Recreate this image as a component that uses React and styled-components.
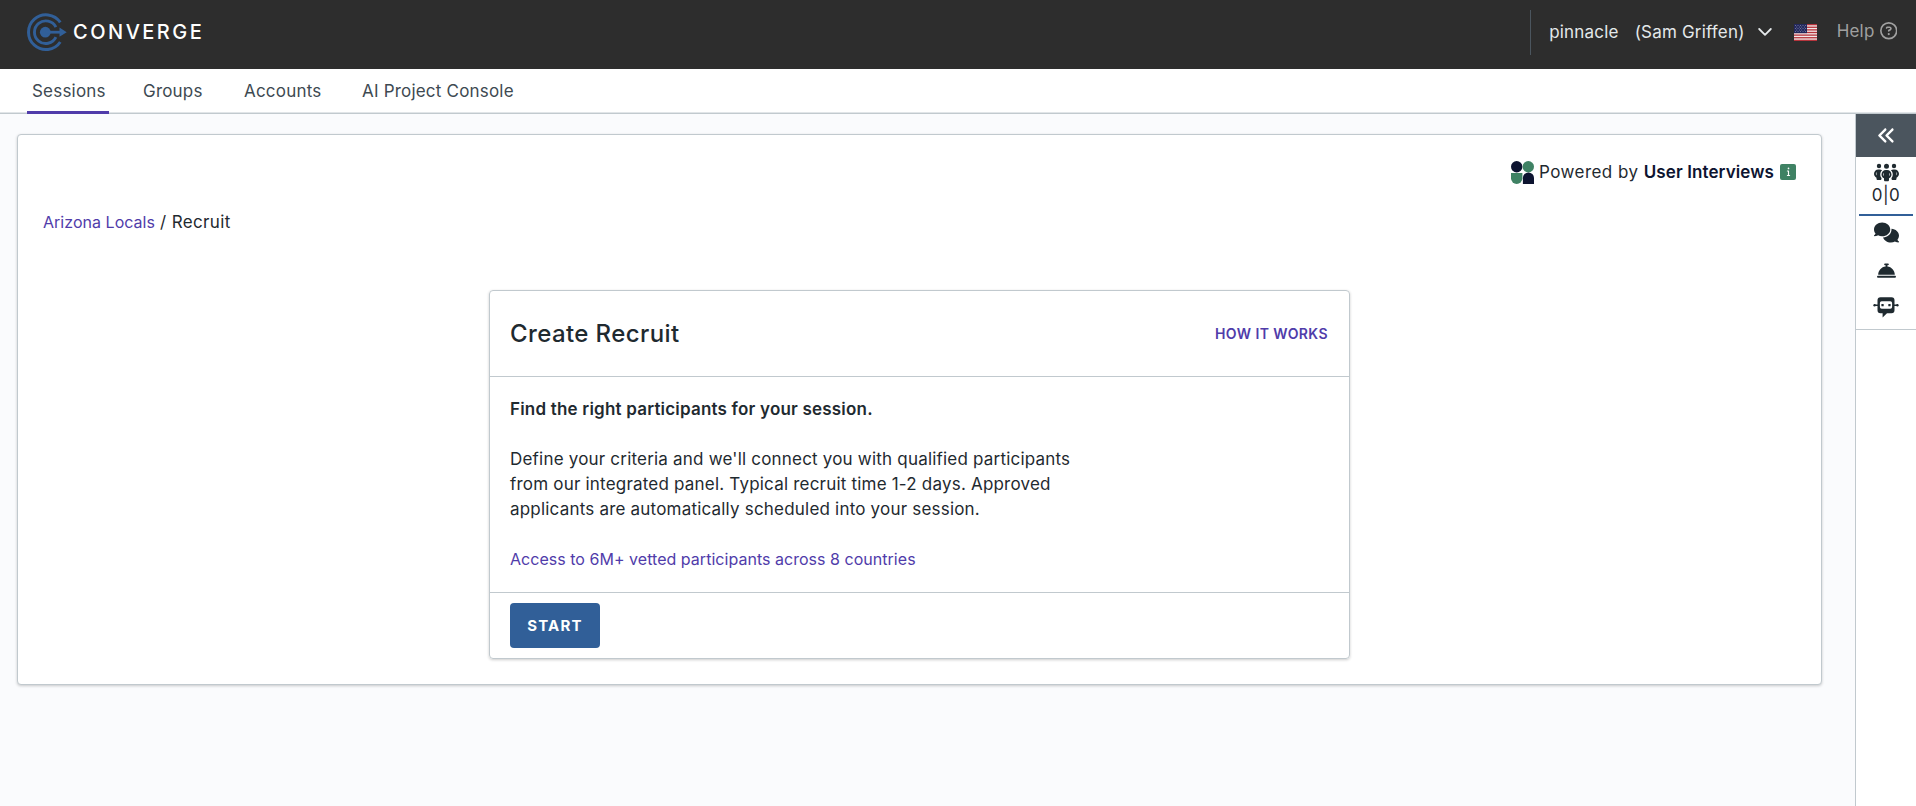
import React, { useState } from 'react';
import styled, { createGlobalStyle } from 'styled-components';
import {
  FaAnglesLeft,
  FaBellConcierge,
  FaComments,
  FaInfo,
  FaPeopleGroup,
  FaRegCircleQuestion,
} from 'react-icons/fa6';

const GlobalStyle = createGlobalStyle`
  * {
    box-sizing: border-box;
  }

  body {
    margin: 0;
    background: #fafbfd;
    color: #1f2a30;
    font-family: Metropolis, Inter, 'Liberation Sans', sans-serif;
    font-size: 17px;
    line-height: 25px;
    letter-spacing: 0.2px;
  }

  svg {
    display: block;
    flex-shrink: 0;
  }
`;

const Page = styled.div`
  display: flex;
  flex-direction: column;
  height: 100vh;
  overflow: hidden;
`;

const TopBar = styled.header`
  display: flex;
  align-items: center;
  justify-content: space-between;
  height: 69px;
  padding: 0 19px 5px 27px;
  background: #2d2d2d;
`;

const Brand = styled.div`
  display: flex;
  align-items: center;
  gap: 5px;
  color: #fff;
  font-size: 20px;
  font-weight: 500;
  letter-spacing: 2.5px;
`;

const Account = styled.div`
  display: flex;
  align-items: center;
  height: 45px;
  padding-left: 18px;
  border-left: 1px solid #4b555e;
  color: #e4e8ea;
  white-space: nowrap;
`;

const UserName = styled.span`
  margin: 0 13px 0 16px;
`;

const FlagSvg = styled.svg`
  margin: 0 20px 0 22px;
`;

const Help = styled.a`
  display: flex;
  align-items: center;
  gap: 5px;
  margin-bottom: 2px;
  color: #a0a0a0;
`;

const Nav = styled.nav`
  display: flex;
  gap: 29px;
  height: 45px;
  padding-left: 27px;
  background: #fff;
  box-shadow: inset 0 -1px #c1c9ce, inset 0 -2px #e1e5e8;
`;

const Tab = styled.a`
  width: ${props => props.$width}px;
  padding: 10px 0 0 5px;
  border-bottom: 3px solid ${props => (props.$active ? '#503caa' : 'transparent')};
  color: #3e4a52;
  white-space: nowrap;
  cursor: pointer;
`;

const Body = styled.div`
  display: flex;
  flex: 1;
  justify-content: space-between;
`;

const Panel = styled.main`
  width: 1805px;
  height: 551px;
  margin: 20px 0 0 17px;
  padding: 24px 25px;
  border: 1px solid #c1c9ce;
  border-radius: 4px;
  background: #fff;
  box-shadow: 0 1px 3px rgba(0, 0, 0, 0.2);
`;

const PoweredBy = styled.div`
  display: flex;
  align-items: center;
  justify-content: flex-end;
  height: 26px;
`;

const PoweredText = styled.span`
  margin: 0 6px 0 5px;
  letter-spacing: 0.45px;

  b {
    color: #0d1430;
    font-weight: 600;
    letter-spacing: 0.1px;
  }
`;

const InfoBadge = styled.span`
  display: flex;
  align-items: center;
  justify-content: center;
  width: 16px;
  height: 16px;
  margin-bottom: 1px;
  border-radius: 2px;
  background: #3f8264;
  color: #fff;
`;

const Breadcrumb = styled.div`
  margin-top: 25px;
  letter-spacing: 0.35px;

  a {
    color: #503caa;
    font-size: 16px;
    letter-spacing: 0.03px;
  }
`;

const Card = styled.section`
  width: 861px;
  height: 369px;
  margin: 55px 0 0 446px;
  border: 1px solid #c1c9ce;
  border-radius: 4px;
  box-shadow: 0 1px 3px rgba(0, 0, 0, 0.2);
`;

const CardHeader = styled.div`
  display: flex;
  align-items: center;
  justify-content: space-between;
  height: 86px;
  padding: 0 21px 0 20px;
  border-bottom: 1px solid #c1c9ce;
`;

const Title = styled.h1`
  margin: 0;
  font-size: 24px;
  font-weight: 500;
  letter-spacing: 0.4px;
`;

const HowLink = styled.a`
  color: #503caa;
  font-size: 14px;
  font-weight: 600;
  letter-spacing: 0.4px;
`;

const CardBody = styled.div`
  height: 216px;
  padding: 20px;
  border-bottom: 1px solid #c1c9ce;
`;

const Copy = styled.p`
  margin: 0 0 25px;
  font-weight: ${props => (props.$bold ? 600 : 400)};
`;

const AccessLink = styled.a`
  color: #503caa;
  font-size: 16px;
  letter-spacing: 0.03px;
`;

const CardFooter = styled.div`
  padding: 10px 20px;
`;

const StartButton = styled.button`
  display: block;
  width: 90px;
  height: 45px;
  padding: 0;
  border: none;
  border-radius: 4px;
  background: #315f98;
  color: #fff;
  font-family: inherit;
  font-size: 15px;
  font-weight: 700;
  letter-spacing: 1.2px;
  cursor: pointer;
`;

const Rail = styled.aside`
  display: flex;
  flex-direction: column;
  width: 61px;
  border-left: 1px solid #c1c9ce;
  background: #fff;
`;

const Collapse = styled.div`
  display: flex;
  align-items: center;
  justify-content: center;
  height: 43px;
  background: #4b555e;
  color: #fff;
`;

const RailTools = styled.div`
  display: flex;
  flex-direction: column;
  align-items: center;
  height: 173px;
  border-bottom: 1px solid #c1c9ce;
`;

const Attendance = styled.div`
  display: flex;
  flex-direction: column;
  align-items: center;
  width: 54px;
  height: 59px;
  padding-top: 3px;
  border-bottom: 2px solid #315f98;
`;

const Count = styled.span`
  margin-top: -2px;
  letter-spacing: 0.5px;
`;

const RailIcon = styled.div`
  margin-top: ${props => props.$top}px;
`;

const Logo = () => (
  <svg width="41" height="40" viewBox="0.7 0 41 40" fill="none" stroke="#315f98">
    <path d="M34 10.4A17.4 17.4 0 1 0 34 30" strokeWidth="3" />
    <path d="M29.6 15.2A11.3 11.3 0 1 0 29.6 25.2" strokeWidth="2.9" />
    <circle cx="19" cy="20.2" r="5.4" fill="#315f98" stroke="none" />
    <path d="M19 20.2H35" strokeWidth="2.8" />
    <path d="M33.2 15.6L40.4 20.2L33.2 24.8Z" fill="#315f98" stroke="none" />
  </svg>
);

const stripes = [0, 1, 2, 3, 4, 5, 6];
const stars = [
  [1.5, 1.5], [4, 1.5], [6.5, 1.5], [9, 1.5], [11.5, 1.5],
  [2.8, 3], [5.3, 3], [7.8, 3], [10.3, 3],
  [1.5, 4.5], [4, 4.5], [6.5, 4.5], [9, 4.5], [11.5, 4.5],
  [2.8, 6], [5.3, 6], [7.8, 6], [10.3, 6],
  [1.5, 7.5], [4, 7.5], [6.5, 7.5], [9, 7.5], [11.5, 7.5],
];

const Flag = () => (
  <FlagSvg width="23" height="17" viewBox="0 0 23 17">
    <rect width="23" height="17" fill="#f3e9e9" />
    {stripes.map(n => (
      <rect key={n} y={n * 2.615} width="23" height="1.31" fill="#b5343c" />
    ))}
    <rect width="13" height="9.15" fill="#23285c" />
    {stars.map(([x, y]) => (
      <circle key={`${x}-${y}`} cx={x} cy={y} r="0.45" fill="#b9bcd4" />
    ))}
  </FlagSvg>
);

const Chevron = () => (
  <svg width="14" height="8" viewBox="0 0 14 8" fill="none" stroke="#e4e8ea" strokeWidth="1.8" strokeLinecap="round" strokeLinejoin="round">
    <path d="M1.2 1L7 6.8L12.8 1" />
  </svg>
);

const UserInterviewsMark = () => (
  <svg width="23" height="23" viewBox="0 0 23 23">
    <circle cx="5.7" cy="5.7" r="5.7" fill="#0d1430" />
    <circle cx="17.3" cy="5.7" r="5.7" fill="#3f8264" />
    <path d="M0 12H11.4V17.3A5.7 5.7 0 0 1 0 17.3Z" fill="#3f8264" />
    <path d="M11.9 23V17A5.55 5.55 0 0 1 23 17V23Z" fill="#0d1430" />
  </svg>
);

const ChatBot = () => (
  <svg width="26" height="21" viewBox="0 0 26 21" fill="#1f2a30">
    <path fillRule="evenodd" d="M7.5 0.3H18.5A3 3 0 0 1 21.5 3.3V13.2A3 3 0 0 1 18.5 16.2H14L9.6 20.4V16.2H7.5A3 3 0 0 1 4.5 13.2V3.3A3 3 0 0 1 7.5 0.3ZM8.7 4.3A1.8 1.8 0 0 0 6.9 6.1V10A1.8 1.8 0 0 0 8.7 11.8H17.3A1.8 1.8 0 0 0 19.1 10V6.1A1.8 1.8 0 0 0 17.3 4.3Z" />
    <rect x="8.4" y="7" width="2.3" height="2.3" rx="0.5" />
    <rect x="15.3" y="7" width="2.3" height="2.3" rx="0.5" />
    <rect x="1" y="7.5" width="4" height="1.5" />
    <rect x="21" y="7.5" width="4" height="1.5" />
    <circle cx="1.6" cy="8.2" r="1.2" />
    <circle cx="24.4" cy="8.2" r="1.2" />
  </svg>
);

const tabs = [
  { name: 'Sessions', width: 82 },
  { name: 'Groups', width: 72 },
  { name: 'Accounts', width: 89 },
  { name: 'AI Project Console', width: 160 },
];

const App = () => {
  const [active, setActive] = useState('Sessions');

  return (
    <Page>
      <GlobalStyle />
      <TopBar>
        <Brand>
          <Logo />
          CONVERGE
        </Brand>
        <Account>
          pinnacle
          <UserName>(Sam Griffen)</UserName>
          <Chevron />
          <Flag />
          <Help>
            Help
            <FaRegCircleQuestion size={17.5} />
          </Help>
        </Account>
      </TopBar>
      <Nav>
        {tabs.map(tab => (
          <Tab
            key={tab.name}
            $width={tab.width}
            $active={tab.name === active}
            onClick={() => setActive(tab.name)}
          >
            {tab.name}
          </Tab>
        ))}
      </Nav>
      <Body>
        <Panel>
          <PoweredBy>
            <UserInterviewsMark />
            <PoweredText>
              Powered by <b>User Interviews</b>
            </PoweredText>
            <InfoBadge>
              <FaInfo size={9} />
            </InfoBadge>
          </PoweredBy>
          <Breadcrumb>
            <a>Arizona Locals</a> / Recruit
          </Breadcrumb>
          <Card>
            <CardHeader>
              <Title>Create Recruit</Title>
              <HowLink>HOW IT WORKS</HowLink>
            </CardHeader>
            <CardBody>
              <Copy $bold>Find the right participants for your session.</Copy>
              <Copy>
                Define your criteria and we'll connect you with qualified participants
                <br />
                from our integrated panel. Typical recruit time 1-2 days. Approved
                <br />
                applicants are automatically scheduled into your session.
              </Copy>
              <AccessLink>Access to 6M+ vetted participants across 8 countries</AccessLink>
            </CardBody>
            <CardFooter>
              <StartButton>START</StartButton>
            </CardFooter>
          </Card>
        </Panel>
        <Rail>
          <Collapse>
            <FaAnglesLeft size={19} />
          </Collapse>
          <RailTools>
            <Attendance>
              <FaPeopleGroup size={25} />
              <Count>0|0</Count>
            </Attendance>
            <RailIcon $top={4}>
              <FaComments size={25} />
            </RailIcon>
            <RailIcon $top={16}>
              <FaBellConcierge size={19} />
            </RailIcon>
            <RailIcon $top={17}>
              <ChatBot />
            </RailIcon>
          </RailTools>
        </Rail>
      </Body>
    </Page>
  );
};

export default App;
